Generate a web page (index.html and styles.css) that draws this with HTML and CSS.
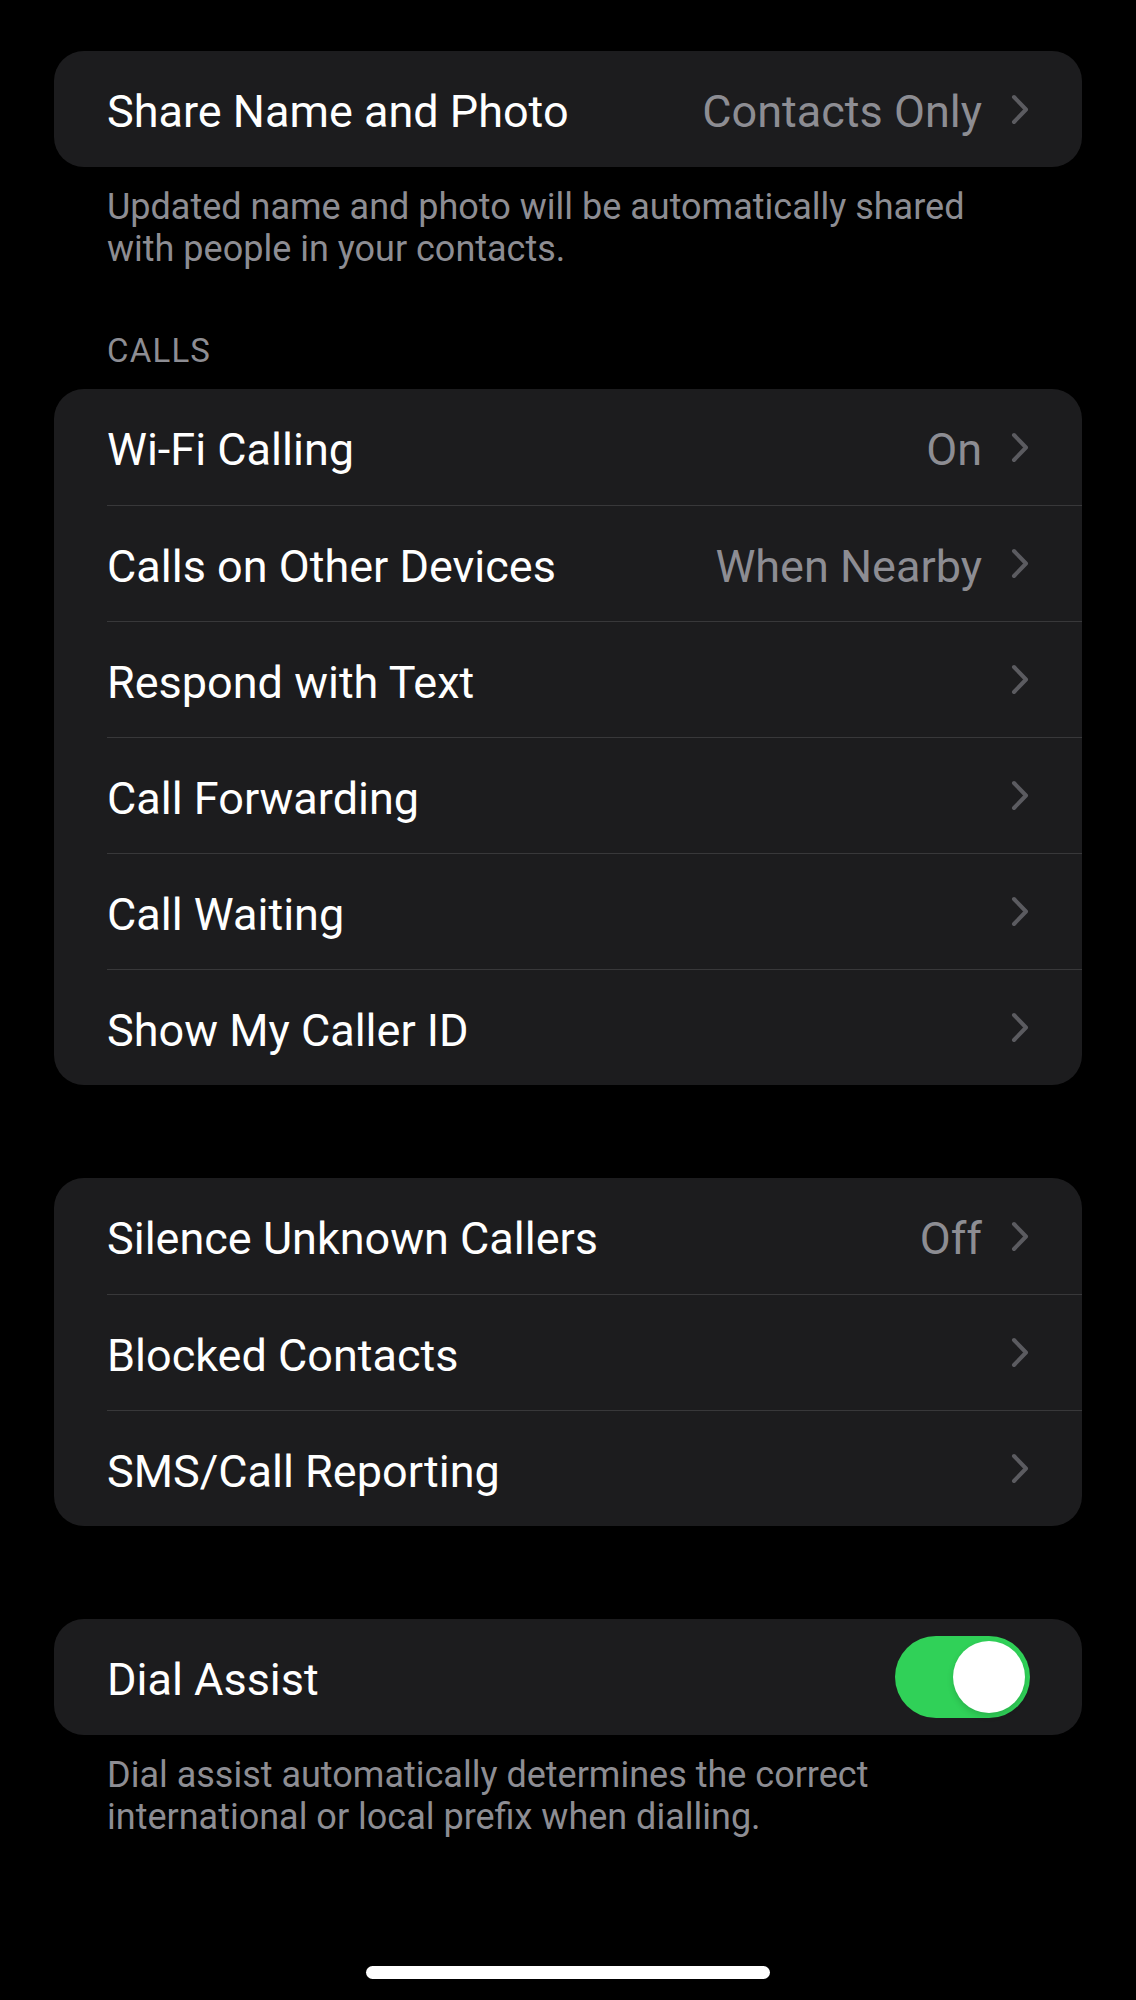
FILE: index.html
```html
<!DOCTYPE html>
<html lang="en">
<head>
  <meta charset="UTF-8">
  <meta name="viewport" content="width=device-width, initial-scale=1.0">
  <title>Phone Settings</title>
  <link rel="stylesheet" href="styles.css">
</head>
<body>

  <main class="settings">

    <section class="group">
      <div class="row">
        <span class="label">Share Name and Photo</span>
        <span class="value">Contacts Only</span>
        <svg class="chevron" viewBox="0 0 18 31"><polyline points="3,3 15,15.5 3,28"/></svg>
      </div>
    </section>
    <p class="note">Updated name and photo will be automatically shared with people in your contacts.</p>

    <h2 class="section-title">CALLS</h2>
    <section class="group">
      <div class="row">
        <span class="label">Wi-Fi Calling</span>
        <span class="value">On</span>
        <svg class="chevron" viewBox="0 0 18 31"><polyline points="3,3 15,15.5 3,28"/></svg>
      </div>
      <div class="row">
        <span class="label">Calls on Other Devices</span>
        <span class="value">When Nearby</span>
        <svg class="chevron" viewBox="0 0 18 31"><polyline points="3,3 15,15.5 3,28"/></svg>
      </div>
      <div class="row">
        <span class="label">Respond with Text</span>
        <svg class="chevron" viewBox="0 0 18 31"><polyline points="3,3 15,15.5 3,28"/></svg>
      </div>
      <div class="row">
        <span class="label">Call Forwarding</span>
        <svg class="chevron" viewBox="0 0 18 31"><polyline points="3,3 15,15.5 3,28"/></svg>
      </div>
      <div class="row">
        <span class="label">Call Waiting</span>
        <svg class="chevron" viewBox="0 0 18 31"><polyline points="3,3 15,15.5 3,28"/></svg>
      </div>
      <div class="row">
        <span class="label">Show My Caller ID</span>
        <svg class="chevron" viewBox="0 0 18 31"><polyline points="3,3 15,15.5 3,28"/></svg>
      </div>
    </section>

    <section class="group spaced">
      <div class="row">
        <span class="label">Silence Unknown Callers</span>
        <span class="value">Off</span>
        <svg class="chevron" viewBox="0 0 18 31"><polyline points="3,3 15,15.5 3,28"/></svg>
      </div>
      <div class="row">
        <span class="label">Blocked Contacts</span>
        <svg class="chevron" viewBox="0 0 18 31"><polyline points="3,3 15,15.5 3,28"/></svg>
      </div>
      <div class="row">
        <span class="label">SMS/Call Reporting</span>
        <svg class="chevron" viewBox="0 0 18 31"><polyline points="3,3 15,15.5 3,28"/></svg>
      </div>
    </section>

    <section class="group spaced">
      <div class="row">
        <span class="label">Dial Assist</span>
        <span class="switch on"><span class="knob"></span></span>
      </div>
    </section>
    <p class="note">Dial assist automatically determines the correct international or local prefix when dialling.</p>

  </main>

  <div class="home-indicator"></div>

</body>
</html>
```

FILE: styles.css
```css
* {

  box-sizing: border-box;
  margin: 0;
  padding: 0;

}

body {

  background-color: #000;
  font-family: Roboto, "Liberation Sans", Arial, sans-serif;
  color: #fff;
  width: 1136px;
  height: 2000px;
  overflow: hidden;

}

.settings {

  padding: 51px 54px 0;

}

.group {

  background-color: #1c1c1e;
  border-radius: 30px;
  overflow: hidden;

}

.group.spaced {

  margin-top: 93px;

}

.row {

  display: flex;
  align-items: center;
  height: 116px;
  margin-left: 53px;
  padding-right: 53px;
  font-size: 45px;

}

.row + .row {

  border-top: 1px solid #38383a;

}

.label,
.value {

  padding-top: 5px;
  white-space: nowrap;

}

.label {

  flex: 1;

}

.value {

  color: #8d8d93;
  margin-right: 29px;

}

.chevron {

  width: 18px;
  height: 31px;
  flex: none;

}

.chevron polyline {

  fill: none;
  stroke: #5b5b60;
  stroke-width: 4;
  stroke-linecap: round;
  stroke-linejoin: round;

}

.note {

  margin-top: 19px;
  padding-left: 53px;
  padding-right: 80px;
  font-size: 36px;
  line-height: 42px;
  color: #8d8d93;

}

.section-title {

  margin-top: 62px;
  margin-bottom: 19px;
  padding-left: 53px;
  font-size: 33px;
  line-height: 38px;
  letter-spacing: 1.2px;
  font-weight: normal;
  color: #8d8d93;

}

.switch {

  display: flex;
  align-items: center;
  justify-content: flex-end;
  width: 135px;
  height: 82px;
  padding: 5px;
  border-radius: 41px;
  background-color: #3a3a3c;
  flex: none;
  margin-right: -1px;

}

.switch.on {

  background-color: #30d158;

}

.knob {

  width: 72px;
  height: 72px;
  border-radius: 50%;
  background-color: #fff;
  box-shadow: 0 3px 6px rgba(0, 0, 0, 0.15);

}

.home-indicator {

  position: absolute;
  left: 366px;
  top: 1966px;
  width: 404px;
  height: 13px;
  border-radius: 7px;
  background-color: #fff;

}
```
